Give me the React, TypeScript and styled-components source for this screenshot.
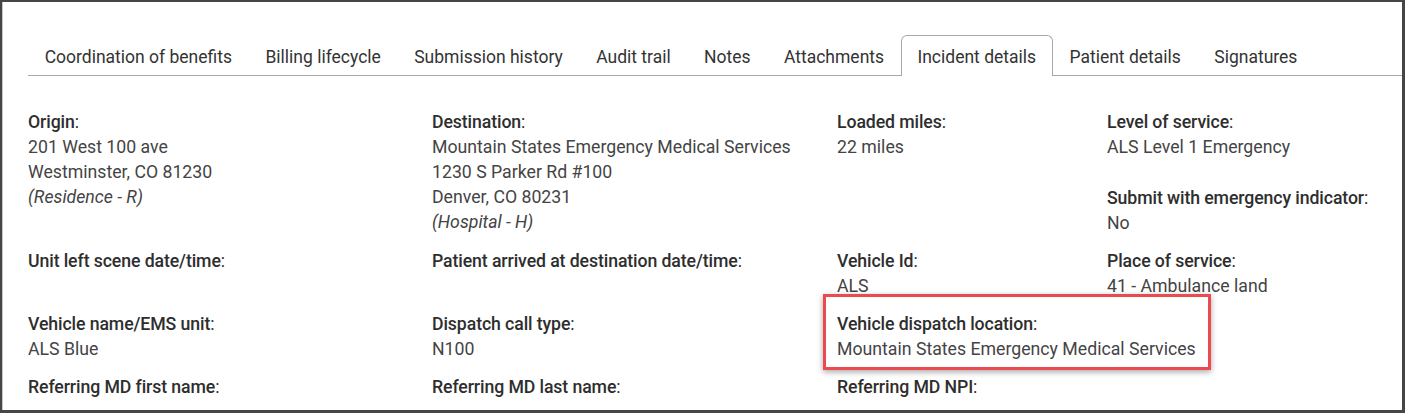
import styled, { createGlobalStyle } from 'styled-components'

const GlobalStyle = createGlobalStyle`
  html, body {
    margin: 0;
    padding: 0;
    background: #ffffff;
  }
  body {
    font-family: Roboto, "Liberation Sans", Arial, sans-serif;
  }
`

type Field = {
  label: string
  values?: string[]
  note?: string
  highlight?: boolean
}

type Cell = Field[]

const tabs = [
  'Coordination of benefits',
  'Billing lifecycle',
  'Submission history',
  'Audit trail',
  'Notes',
  'Attachments',
  'Incident details',
  'Patient details',
  'Signatures'
]

const rows: Cell[][] = [
  [
    [{ label: 'Origin', values: ['201 West 100 ave', 'Westminster, CO 81230'], note: '(Residence - R)' }],
    [
      {
        label: 'Destination',
        values: ['Mountain States Emergency Medical Services', '1230 S Parker Rd #100', 'Denver, CO 80231'],
        note: '(Hospital - H)'
      }
    ],
    [{ label: 'Loaded miles', values: ['22 miles'] }],
    [
      { label: 'Level of service', values: ['ALS Level 1 Emergency'] },
      { label: 'Submit with emergency indicator', values: ['No'] }
    ]
  ],
  [
    [{ label: 'Unit left scene date/time' }],
    [{ label: 'Patient arrived at destination date/time' }],
    [{ label: 'Vehicle Id', values: ['ALS'] }],
    [{ label: 'Place of service', values: ['41 - Ambulance land'] }]
  ],
  [
    [{ label: 'Vehicle name/EMS unit', values: ['ALS Blue'] }],
    [{ label: 'Dispatch call type', values: ['N100'] }],
    [{ label: 'Vehicle dispatch location', values: ['Mountain States Emergency Medical Services'], highlight: true }],
    []
  ],
  [
    [{ label: 'Referring MD first name' }],
    [{ label: 'Referring MD last name' }],
    [{ label: 'Referring MD NPI' }],
    []
  ]
]

export default function App() {
  return (
    <>
      <GlobalStyle />
      <Frame>
        <TabBar>
          {tabs.map(t => (
            <Tab key={t} active={t === 'Incident details'}>
              {t}
            </Tab>
          ))}
        </TabBar>
        <Details>
          {rows.map((row, ri) => (
            <Row key={ri}>
              {row.map((cell, ci) => (
                <Column key={ci}>
                  {cell.map(f => (
                    <FieldBlock key={f.label}>
                      {f.highlight && <Callout />}
                      <Label>
                        <strong>{f.label}</strong>:
                      </Label>
                      {f.values?.map(v => (
                        <Value key={v}>{v}</Value>
                      ))}
                      {f.note && <Note>{f.note}</Note>}
                    </FieldBlock>
                  ))}
                </Column>
              ))}
            </Row>
          ))}
        </Details>
      </Frame>
    </>
  )
}

const Frame = styled.div`
  width: 1405px;
  height: 413px;
  box-sizing: border-box;
  border: 2px solid #464646;
  border-right-width: 3px;
  border-bottom-width: 3px;
  box-shadow: inset 1px 0 0 #c8c8c8;
  padding: 33px 0 0 26px;
  overflow: hidden;
  background: #fff;
`

const TabBar = styled.div`
  display: flex;
  height: 40px;
  border-bottom: 1px solid #a9a9a9;
`

const Tab = styled.div<{ active?: boolean }>`
  display: flex;
  align-items: center;
  padding: 2px 15.7px 0;
  font-size: 17.5px;
  color: #333;
  white-space: nowrap;
  box-sizing: border-box;
  border: 1px solid ${p => (p.active ? '#a9a9a9' : 'transparent')};
  border-bottom: none;
  border-radius: 6px 6px 0 0;
  background: #fff;
  margin-bottom: ${p => (p.active ? '-1px' : '0')};
  height: ${p => (p.active ? '41px' : '40px')};
`

const Details = styled.div`
  display: flex;
  flex-direction: column;
  gap: 13px;
  padding-top: 34px;
`

const Row = styled.div`
  display: grid;
  grid-template-columns: 404px 405px 270px 1fr;
`

const Column = styled.div`
  display: flex;
  flex-direction: column;
  gap: 26px;
`

const FieldBlock = styled.div`
  position: relative;
  font-size: 17.7px;
  line-height: 25px;
  white-space: nowrap;
`

const Label = styled.div`
  color: #2e2e2e;
  font-weight: 400;

  strong {
    font-weight: 500;
    letter-spacing: -0.1px;
  }
`

const Value = styled.div`
  color: #444;
`

const Note = styled(Value)`
  font-style: italic;
`

const Callout = styled.div`
  position: absolute;
  left: -14px;
  top: -18px;
  width: 388px;
  height: 76px;
  box-sizing: border-box;
  border: 3px solid #ec4a4f;
  box-shadow: 0 2px 6px rgba(0, 0, 0, 0.35);
  pointer-events: none;
`
